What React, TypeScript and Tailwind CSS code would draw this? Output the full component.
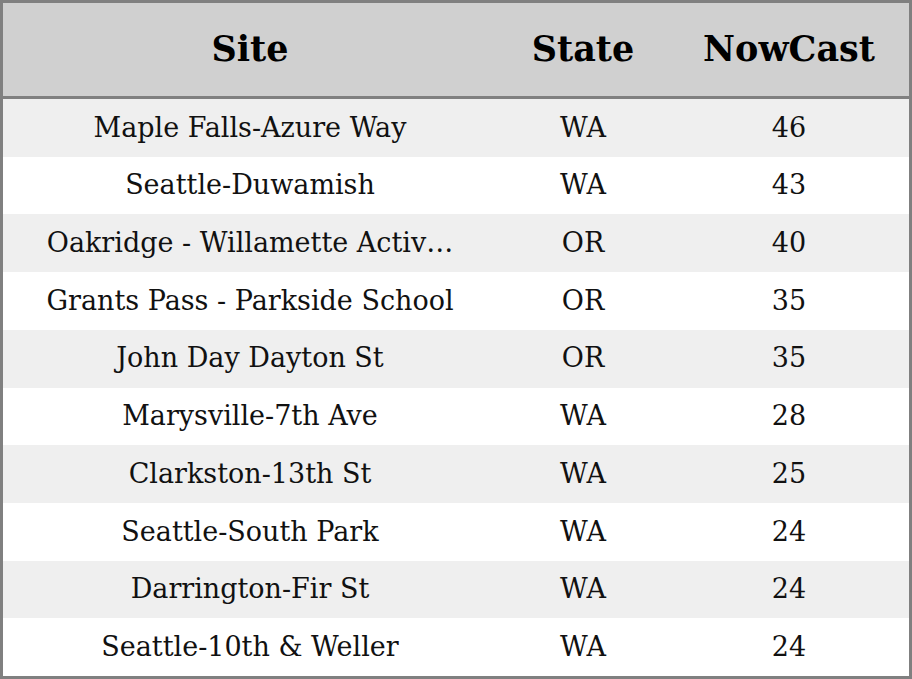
const rows = [
  { site: 'Maple Falls-Azure Way', state: 'WA', nowcast: 46 },
  { site: 'Seattle-Duwamish', state: 'WA', nowcast: 43 },
  { site: 'Oakridge - Willamette Activ…', state: 'OR', nowcast: 40 },
  { site: 'Grants Pass - Parkside School', state: 'OR', nowcast: 35 },
  { site: 'John Day Dayton St', state: 'OR', nowcast: 35 },
  { site: 'Marysville-7th Ave', state: 'WA', nowcast: 28 },
  { site: 'Clarkston-13th St', state: 'WA', nowcast: 25 },
  { site: 'Seattle-South Park', state: 'WA', nowcast: 24 },
  { site: 'Darrington-Fir St', state: 'WA', nowcast: 24 },
  { site: 'Seattle-10th & Weller', state: 'WA', nowcast: 24 },
]

export default function App() {
  return (
    <div
      className="w-[912px] h-[679px] border-[3px] border-[#808080] flex flex-col bg-white text-[#111]"
      style={{ fontFamily: '"DejaVu Serif", serif' }}
    >
      {/* header */}
      <div className="h-[96px] flex items-center bg-[#d0d0d0] border-b-[3px] border-[#808080] text-[35px] font-bold text-black shrink-0">
        <div className="w-[494px] text-center">Site</div>
        <div className="w-[172px] text-center">State</div>
        <div className="flex-1 text-center">NowCast</div>
      </div>

      {rows.map((r, i) => (
        <div
          key={i}
          className={`flex-1 flex items-center text-[27px] ${i % 2 === 0 ? 'bg-[#efefef]' : 'bg-white'}`}
        >
          <div className="w-[494px] text-center whitespace-nowrap">{r.site}</div>
          <div className="w-[172px] text-center">{r.state}</div>
          <div className="flex-1 text-center">{r.nowcast}</div>
        </div>
      ))}
    </div>
  )
}
